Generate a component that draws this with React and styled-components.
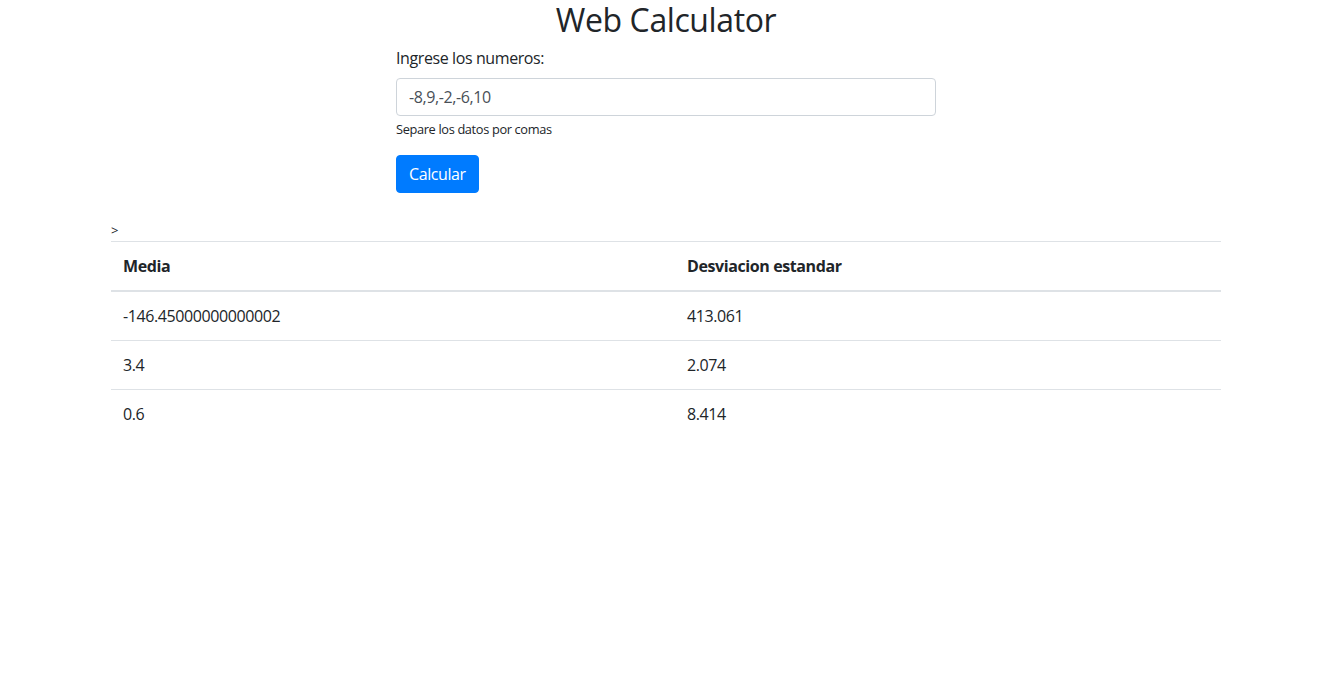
import React from 'react';
import styled, { createGlobalStyle } from 'styled-components';

const GlobalStyle = createGlobalStyle`
    * {
        box-sizing: border-box;
    }
    body {
        margin: 0;
        font-family: 'Open Sans', 'Noto Sans', sans-serif;
        font-size: 16px;
        line-height: 1.5;
        letter-spacing: -0.4px;
        color: #212529;
        background: #fff;
    }
`;

const results = [
    { media: '-146.45000000000002', desv: '413.061' },
    { media: '3.4', desv: '2.074' },
    { media: '0.6', desv: '8.414' },
];

function App() {
    return (
        <>
            <GlobalStyle />
            <Title>Web Calculator</Title>
            <Container>
                <FormColumn>
                    <FormGroup>
                        <Label htmlFor="numeros">Ingrese los numeros:</Label>
                        <Input id="numeros" defaultValue="-8,9,-2,-6,10" />
                        <HelpText>Separe los datos por comas</HelpText>
                    </FormGroup>
                    <Button type="button">Calcular</Button>
                </FormColumn>
                <Marker>&gt;</Marker>
                <Table>
                    <thead>
                        <tr>
                            <Th width="564px">Media</Th>
                            <Th>Desviacion estandar</Th>
                        </tr>
                    </thead>
                    <tbody>
                        {results.map((r, i) => (
                            <tr key={i}>
                                <Td>{r.media}</Td>
                                <Td>{r.desv}</Td>
                            </tr>
                        ))}
                    </tbody>
                </Table>
            </Container>
        </>
    );
}

const Title = styled.h1`
    margin: 0 0 8px 0;
    padding-top: 2px;
    text-align: center;
    font-size: 32px;
    font-weight: 500;
    line-height: 36px;
    letter-spacing: -0.4px;
`;

const Container = styled.div`
    max-width: 1140px;
    margin: 0 auto;
    padding: 0 15px;
`;

const FormColumn = styled.form`
    width: 540px;
    margin-left: 285px;
`;

const FormGroup = styled.div`
    display: flex;
    flex-direction: column;
    margin-bottom: 16px;
`;

const Label = styled.label`
    margin-bottom: 8px;
`;

const Input = styled.input`
    height: 38px;
    padding: 6px 12px;
    font-family: inherit;
    font-size: 16px;
    letter-spacing: -0.4px;
    color: #495057;
    border: 1px solid #ced4da;
    border-radius: 4px;
    outline: none;
`;

const HelpText = styled.small`
    margin-top: 4px;
    font-size: 12.8px;
    line-height: 19px;
    letter-spacing: -0.35px;
`;

const Button = styled.button`
    align-self: flex-start;
    height: 38px;
    padding: 6px 12px;
    font-family: inherit;
    font-size: 16px;
    letter-spacing: -0.4px;
    color: #fff;
    background: #007bff;
    border: 1px solid #007bff;
    border-radius: 4px;
    cursor: pointer;
`;

const Marker = styled.div`
    margin-top: 26px;
    font-size: 13px;
    line-height: 22px;
`;

const Table = styled.table`
    width: 100%;
    border-collapse: collapse;
`;

const Th = styled.th`
    width: ${(props) => props.width || 'auto'};
    padding: 12px;
    text-align: left;
    font-weight: 700;
    border-top: 1px solid #dee2e6;
    border-bottom: 2px solid #dee2e6;
`;

const Td = styled.td`
    padding: 12px;
    border-top: 1px solid #dee2e6;
`;

export default App;
